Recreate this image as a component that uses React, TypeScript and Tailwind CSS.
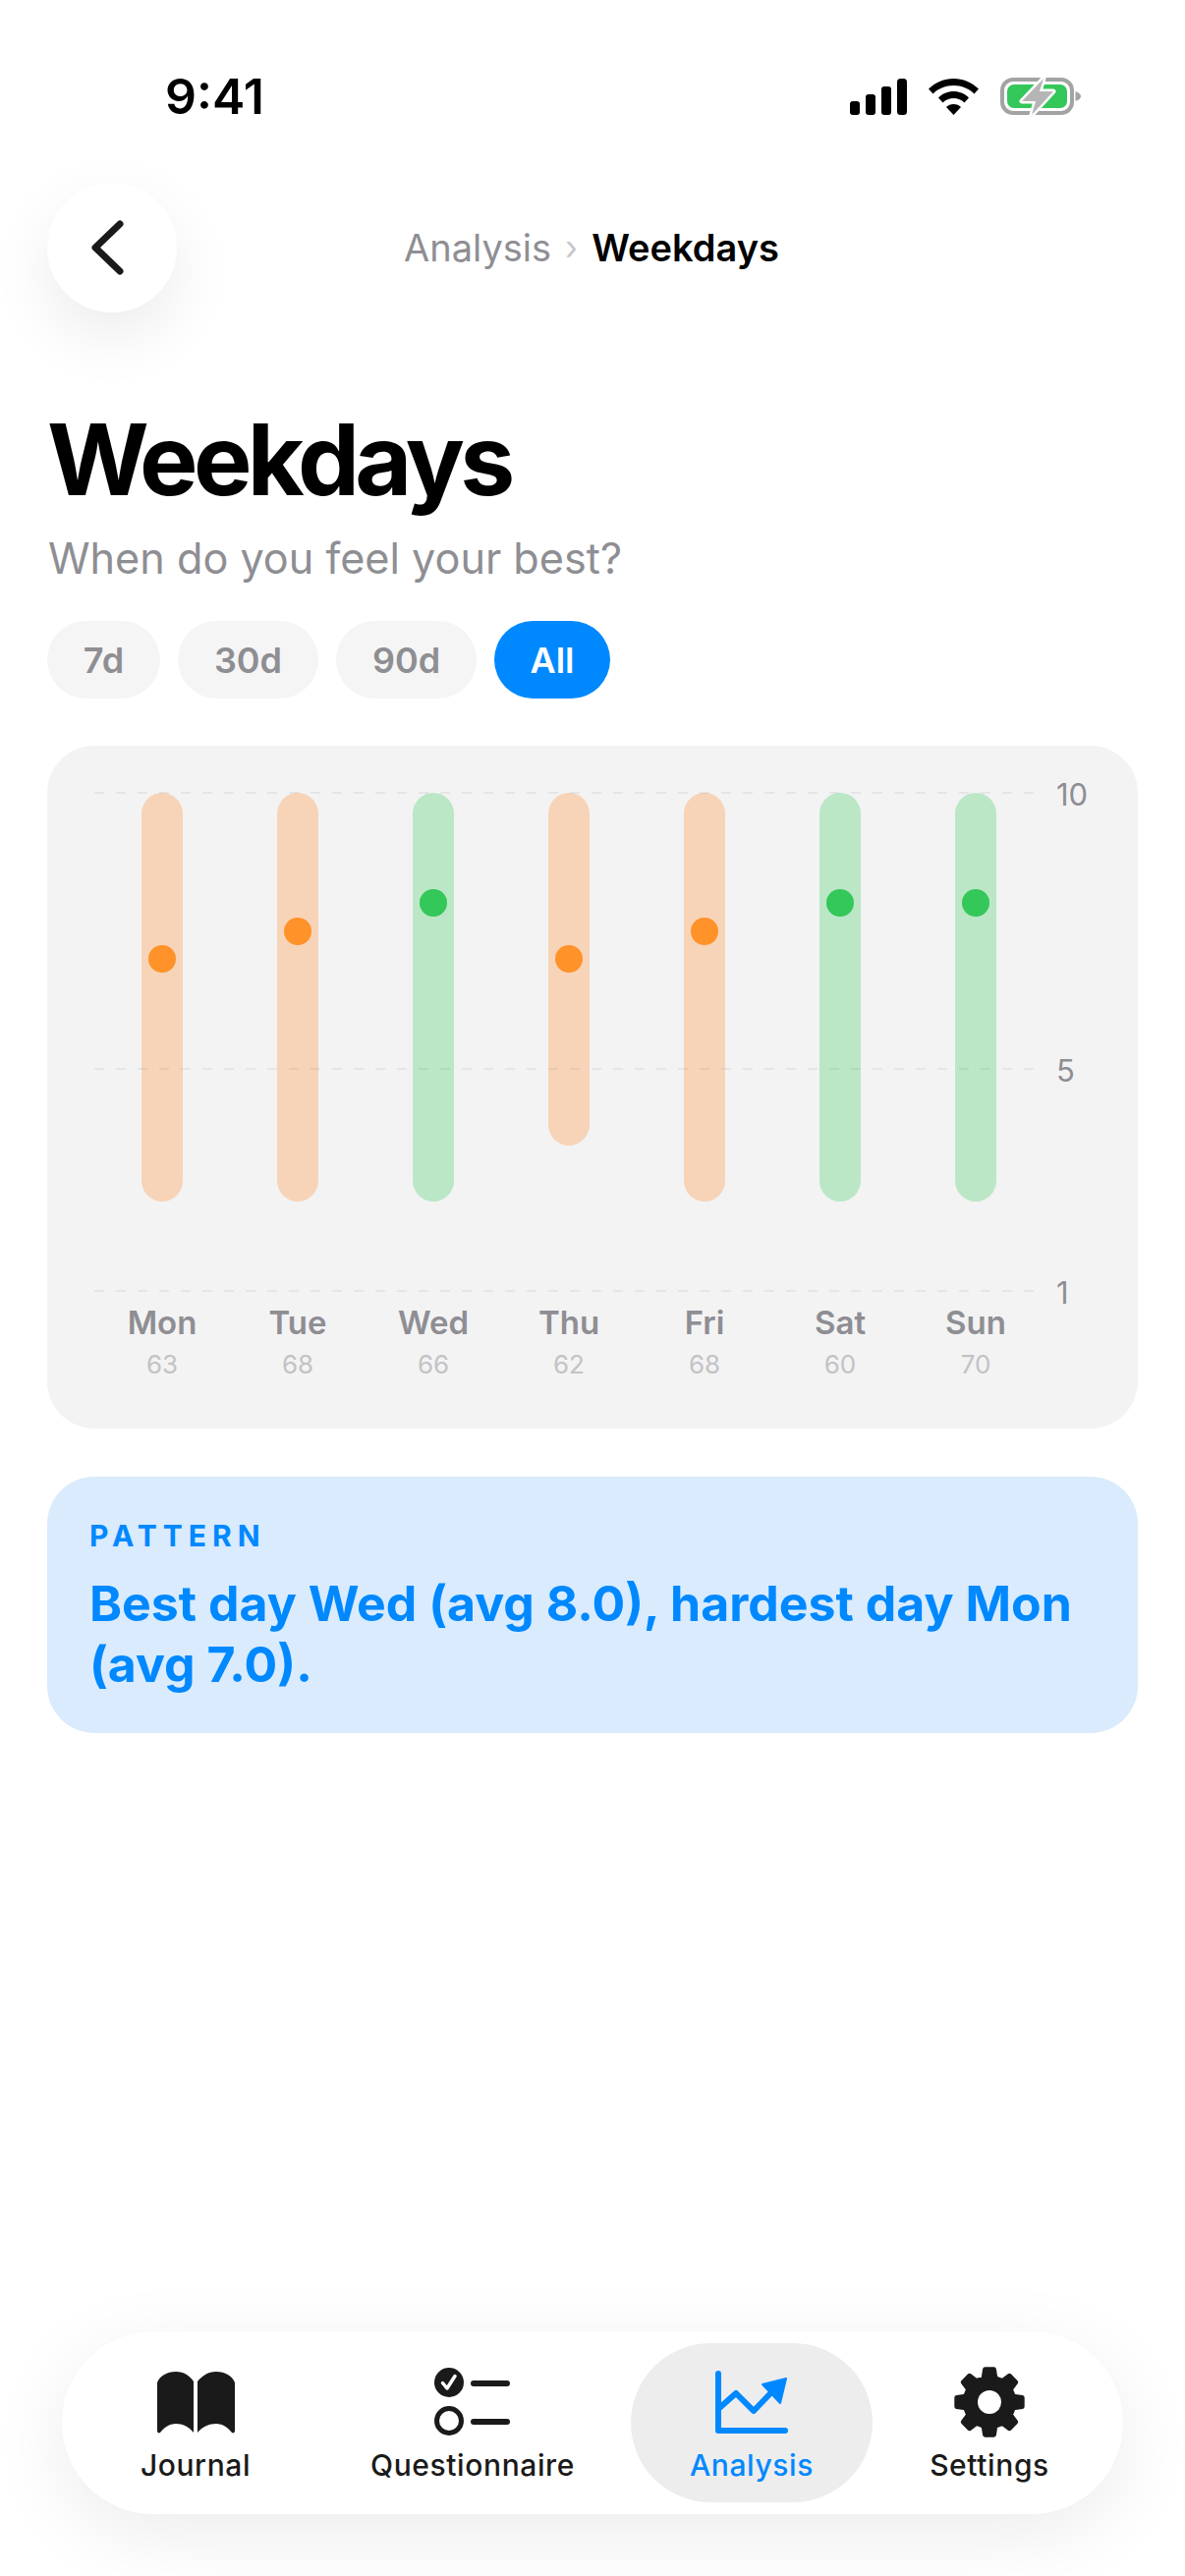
import React from "react";

const days = [
  { d: "Mon", n: 63, h: 416, dot: 169, good: false },
  { d: "Tue", n: 68, h: 416, dot: 141, good: false },
  { d: "Wed", n: 66, h: 416, dot: 112, good: true },
  { d: "Thu", n: 62, h: 359, dot: 169, good: false },
  { d: "Fri", n: 68, h: 416, dot: 141, good: false },
  { d: "Sat", n: 60, h: 416, dot: 112, good: true },
  { d: "Sun", n: 70, h: 416, dot: 112, good: true },
];

const gearPath = (() => {
  const cx = 36, cy = 36, ro = 33.5, ri = 25, teeth = 8;
  const pts: string[] = [];
  for (let i = 0; i < teeth; i++) {
    const a = (i * Math.PI * 2) / teeth - Math.PI / 2;
    const step = (Math.PI * 2) / teeth;
    const p = (r: number, t: number) =>
      `${(cx + r * Math.cos(a + t)).toFixed(2)} ${(cy + r * Math.sin(a + t)).toFixed(2)}`;
    pts.push(i === 0 ? `M${p(ri, -step * 0.3)}` : `L${p(ri, -step * 0.3)}`);
    pts.push(`L${p(ro, -step * 0.17)}`);
    pts.push(`L${p(ro, step * 0.17)}`);
    pts.push(`L${p(ri, step * 0.3)}`);
  }
  return pts.join(" ") + "Z";
})();

function StatusIcons() {
  return (
    <div className="flex items-center">
      <svg width="58" height="37" viewBox="0 0 58 37" fill="#000">
        <rect x="0" y="23" width="10" height="14" rx="3" />
        <rect x="16" y="16" width="10" height="21" rx="3" />
        <rect x="32" y="8" width="10" height="29" rx="3" />
        <rect x="48" y="0" width="10" height="37" rx="3.5" />
      </svg>
      <svg className="ml-[22px]" width="51" height="37" viewBox="0 0 51 37" fill="#000">
        <path d="M25.5 0C35 0 44 4 51 10.5L46.5 15.5C41 10 33.5 7 25.5 7S10 10 4.500 15.500L0 10.500C7 4 16 0 25.500 0Z" />
        <path d="M25.500 13C31.500 13 37 15.200 41 19.500L36.500 24.500C33.500 21.500 29.800 20 25.500 20S17.500 21.500 14.500 24.500L10 19.500C14 15.200 19.500 13 25.500 13Z" />
        <path d="M25.500 26C28.500 26 31 27 33 29L25.500 37L18 29C20 27 22.500 26 25.500 26Z" />
      </svg>
      <svg className="ml-[22px]" width="82" height="40" viewBox="0 0 82 40">
        <rect x="2" y="3" width="71" height="34" rx="11" fill="none" stroke="#A3A3A3" strokeWidth="4" />
        <rect x="7" y="8" width="61" height="24" rx="7" fill="#34C759" />
        <path d="M76.500 15C80 16 82 18 82 20S80 24 76.500 25Z" fill="#A3A3A3" />
        <path d="M44 2L22 25H36L32 39L54 15H40Z" fill="#B5B5B5" stroke="#fff" strokeWidth="5" strokeLinejoin="round" paintOrder="stroke" />
      </svg>
    </div>
  );
}

function BookIcon() {
  return (
    <svg width="79" height="63" viewBox="0 0 79 63" fill="#1A1A1A">
      <path d="M0 11C3 4 10 0 19 0C27 0 33 4 37 10V62C32 56 26 53 19 53C12 53 7 57 3 62C1.500 63 0 62 0 60Z" />
      <path d="M79 11C76 4 69 0 60 0C52 0 46 4 41 10V62C46 56 53 53 60 53C67 53 72 57 76 62C77.500 63 79 62 79 60Z" />
    </svg>
  );
}

function ChecklistIcon() {
  return (
    <svg width="78" height="70" viewBox="0 0 78 70">
      <circle cx="15" cy="15" r="15" fill="#1A1A1A" />
      <path d="M8.500 15.500L13 21L21 8.500" fill="none" stroke="#fff" strokeWidth="3.500" strokeLinecap="round" strokeLinejoin="round" />
      <circle cx="15" cy="54" r="12.500" fill="none" stroke="#1A1A1A" strokeWidth="5" />
      <path d="M40 16H74M40 55H74" stroke="#1A1A1A" strokeWidth="6" strokeLinecap="round" />
    </svg>
  );
}

function ChartIcon() {
  return (
    <svg width="74" height="64" viewBox="0 0 74 64" fill="none">
      <path d="M3 3V61H71" stroke="#0088FF" strokeWidth="6" strokeLinecap="round" strokeLinejoin="round" />
      <path d="M3 39L21 23L39 41L60 19" stroke="#0088FF" strokeWidth="6" strokeLinecap="round" strokeLinejoin="round" />
      <path d="M48 14L72 8L66 33Z" fill="#0088FF" stroke="#0088FF" strokeWidth="2" strokeLinejoin="round" />
    </svg>
  );
}

function GearIcon() {
  return (
    <svg width="72" height="72" viewBox="0 0 72 72">
      <path d={gearPath} fill="#1A1A1A" stroke="#1A1A1A" strokeWidth="5" strokeLinejoin="round" />
      <circle cx="36" cy="36" r="12" fill="#fff" />
    </svg>
  );
}

function GridLine({ label, className }: { label: string; className: string }) {
  return (
    <div className={`absolute left-0 flex items-center h-[2px] ${className}`}>
      <div className="w-[963px] h-[2px] bg-[repeating-linear-gradient(90deg,rgba(0,0,0,0.06)_0px,rgba(0,0,0,0.06)_10px,transparent_10px,transparent_22px)]" />
      <span className="ml-[16px] mt-[2px] text-[31px] text-[#8E8E93] leading-none">{label}</span>
    </div>
  );
}

function Tab({ label, icon, className, active }: { label: string; icon: React.ReactNode; className: string; active?: boolean }) {
  return (
    <div className={`flex flex-col items-center h-full rounded-[81px] ${active ? "bg-[#EDEDED]" : ""} ${className}`}>
      <div className="h-[72px] mt-[24px] flex items-center justify-center">{icon}</div>
      <span className={`mt-[8px] text-[30px] font-medium leading-[40px] tracking-[0.6px] ${active ? "text-[#0088FF]" : "text-[#1A1A1A]"}`}>
        {label}
      </span>
    </div>
  );
}

export default function App() {
  return (
    <div className="w-[1206px] h-[2622px] bg-white flex flex-col font-['Inter',sans-serif] overflow-hidden">
      <div className="h-[186px] shrink-0 flex items-start justify-between pl-[168px] pr-[106px] pt-[78px]">
        <span className="text-[50px] font-semibold leading-[40px] text-black">9:41</span>
        <StatusIcons />
      </div>

      <div className="h-[132px] shrink-0 ml-[48px] mr-[48px] flex items-center relative">
        <div className="w-[132px] h-[132px] rounded-full bg-white shadow-[0_24px_64px_rgba(0,0,0,0.08)] flex items-center justify-center">
          <svg width="40" height="60" viewBox="0 0 40 60" fill="none" className="-ml-[4px]">
            <path d="M30 6L5 30L30 54" stroke="#1A1A1A" strokeWidth="7" strokeLinecap="round" strokeLinejoin="round" />
          </svg>
        </div>
        <div className="ml-[231px] flex items-center text-[38px] leading-none">
          <span className="text-[#8E8E93]">Analysis</span>
          <span className="mx-[14px] text-[#C7C7CC] text-[34px]">›</span>
          <span className="font-semibold text-black">Weekdays</span>
        </div>
      </div>

      <div className="px-[48px] flex flex-col">
        <h1 className="mt-[105px] text-[100px] font-bold leading-[90px] tracking-[-4.7px] text-black">Weekdays</h1>
        <p className="mt-[27px] ml-[1px] text-[43.2px] leading-[56px] text-[#8E8E93]">When do you feel your best?</p>

        <div className="mt-[36px] flex gap-[18px] h-[79px]">
          <div className="w-[115px] rounded-[40px] bg-[#F5F5F5] flex items-center justify-center text-[36px] font-semibold text-[#8E8E93]">7d</div>
          <div className="w-[143px] rounded-[40px] bg-[#F5F5F5] flex items-center justify-center text-[36px] font-semibold text-[#8E8E93]">30d</div>
          <div className="w-[143px] rounded-[40px] bg-[#F5F5F5] flex items-center justify-center text-[36px] font-semibold text-[#8E8E93]">90d</div>
          <div className="w-[118px] rounded-[40px] bg-[#0088FF] flex items-center justify-center text-[36px] font-semibold text-white">All</div>
        </div>

        <div className="mt-[48px] h-[695px] rounded-[48px] bg-[#F3F3F3] pl-[48px] pt-[48px]">
          <div className="relative h-[507px]">
            <div className="grid grid-cols-[repeat(7,138px)]">
              {days.map((x) => (
                <div key={x.d} className="flex justify-center">
                  <div
                    className={`relative w-[42px] rounded-[21px] ${x.good ? "bg-[#BBE7C6]" : "bg-[#F7D4B8]"}`}
                    style={{ height: x.h }}
                  >
                    <div
                      className={`absolute left-[7px] w-[28px] h-[28px] rounded-full ${x.good ? "bg-[#34C759]" : "bg-[#FF9228]"}`}
                      style={{ top: x.dot - 14 }}
                    />
                  </div>
                </div>
              ))}
            </div>
            <GridLine label="10" className="top-[-1px]" />
            <GridLine label="5" className="top-[280px]" />
            <GridLine label="1" className="top-[506px]" />
          </div>
          <div className="mt-[11px] grid grid-cols-[repeat(7,138px)]">
            {days.map((x) => (
              <div key={x.d} className="flex flex-col items-center">
                <span className="text-[33px] leading-[42px] font-semibold text-[#8E8E93]">{x.d}</span>
                <span className="mt-[5px] text-[26px] leading-[34px] text-[#C2C2C6]">{x.n}</span>
              </div>
            ))}
          </div>
        </div>

        <div className="mt-[49px] h-[261px] rounded-[48px] bg-[#D9EBFD] px-[43px] pt-[42px]">
          <div className="text-[30px] leading-[36px] font-bold tracking-[6px] text-[#0088FF]">PATTERN</div>
          <div className="mt-[20px] text-[50px] leading-[62px] font-bold text-[#0088FF]">
            Best day Wed (avg 8.0), hardest day Mon (avg 7.0).
          </div>
        </div>
      </div>

      <div className="mt-auto mb-[63px] mx-[63px] h-[186px] rounded-[93px] bg-white shadow-[0_20px_80px_rgba(0,0,0,0.08)] flex items-center pl-[15px] pr-[17px] py-[12px]">
        <Tab label="Journal" icon={<BookIcon />} className="w-[242px]" />
        <Tab label="Questionnaire" icon={<ChecklistIcon />} className="w-[322px]" />
        <Tab label="Analysis" icon={<ChartIcon />} className="w-[246px]" active />
        <Tab label="Settings" icon={<GearIcon />} className="w-[238px]" />
      </div>
    </div>
  );
}
